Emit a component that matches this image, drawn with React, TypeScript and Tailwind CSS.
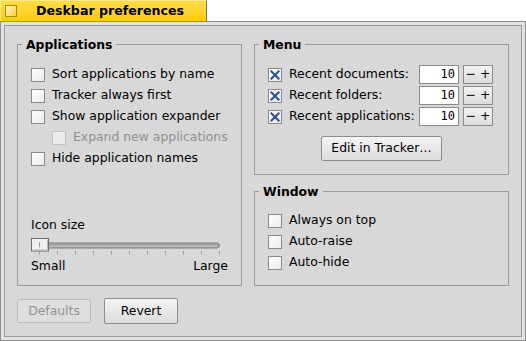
import React from "react";

function Box({ checked, disabled }: { checked?: boolean; disabled?: boolean }) {
  return (
    <span
      className={
        "w-[14px] h-[14px] shrink-0 border flex items-center justify-center " +
        (disabled
          ? "border-[#c2c2c2] bg-[#ebebeb]"
          : "border-[#8a8a8a] bg-gradient-to-br from-white to-[#ebebeb]")
      }
    >
      {checked && (
        <svg width="10" height="10" viewBox="0 0 10 10">
          <path d="M1.5 1.5L8.5 8.5M8.5 1.5L1.5 8.5" stroke="#2b5797" strokeWidth="2.2" strokeLinecap="square" />
        </svg>
      )}
    </span>
  );
}

function CheckRow({ label, checked, disabled, indent }: { label: string; checked?: boolean; disabled?: boolean; indent?: boolean }) {
  return (
    <div className={"h-[21px] flex items-center gap-[7px] " + (indent ? "pl-[21px]" : "")}>
      <Box checked={checked} disabled={disabled} />
      <span className={disabled ? "text-[#8f8f8f]" : "text-black"}>{label}</span>
    </div>
  );
}

function MenuRow({ label }: { label: string }) {
  return (
    <div className="h-[21px] flex items-center">
      <Box checked />
      <span className="ml-[7px] w-[130px] whitespace-nowrap">{label}</span>
      <div className="w-[40px] h-[19px] -mt-[1px] border border-[#8c8c8c] bg-white flex items-center justify-end pr-[3px] font-['DejaVu_Sans_Mono',monospace] text-[12px]">
        10
      </div>
      <div className="ml-[4px] -mt-[1px] w-[30px] h-[19px] border border-[#8c8c8c] bg-gradient-to-b from-[#f2f2f2] to-[#dcdcdc] flex items-center justify-center gap-[4px] leading-none">
        <span>−</span>
        <span>+</span>
      </div>
    </div>
  );
}

function Slider() {
  const ticks = Array.from({ length: 11 }, (_, i) => 8.5 + i * 18);
  return (
    <svg width="196" height="17" viewBox="0 0 196 17" className="block">
      <rect x="0.5" y="5" width="188" height="5" rx="2.5" fill="#a9a9a9" stroke="#7c7c7c" />
      <line x1="3" y1="8.5" x2="186" y2="8.5" stroke="#c4c4c4" />
      {ticks.map((x) => (
        <line key={x} x1={x} y1="13" x2={x} y2="16.5" stroke="#a0a0a0" />
      ))}
      <rect x="0.5" y="0.5" width="17" height="12.5" fill="#f0f0f0" stroke="#6e6e6e" />
      <line x1="1.5" y1="12" x2="17" y2="12" stroke="#b8b8b8" />
      <line x1="16.5" y1="1.5" x2="16.5" y2="12" stroke="#b8b8b8" />
      <line x1="8.5" y1="4" x2="8.5" y2="9.5" stroke="#a0a0a0" />
    </svg>
  );
}

export default function App() {
  return (
    <div className="w-[526px] h-[341px] bg-white flex flex-col font-['DejaVu_Sans','Liberation_Sans',sans-serif] text-[12.4px] text-black overflow-hidden">
      <div className="flex h-[21px] shrink-0">
        <div className="w-[207px] h-full border-r border-[#6f6f6f] border-t border-t-[#ffe98a] border-l border-l-[#ffe98a] bg-gradient-to-b from-[#ffdd45] to-[#ffcb00] flex items-center pl-[4px]">
          <span className="w-[12px] h-[12px] border border-[#a88a00] bg-gradient-to-br from-[#fff8d0] to-[#ffcc00]" />
          <span className="ml-[19px] font-bold text-[12.6px]">Deskbar preferences</span>
        </div>
        <div className="flex-1 bg-white" />
      </div>
      <div className="h-[320px] border border-[#8e8e8e] bg-[#e2e2e2] p-[3px] flex">
        <div className="flex-1 border border-[#9a9a9a] bg-[#d8d8d8] flex flex-col pt-[11px] pl-[12px] pr-[11px]">
          <div className="flex gap-[12px]">
            <fieldset className="w-[225px] border border-[#9c9c9c]">
              <legend className="ml-[4px] px-[4px] font-bold leading-[15px]">Applications</legend>
              <div className="h-[233px] flex flex-col pt-[12px] pl-[13px] pr-[13px]">
                <CheckRow label="Sort applications by name" />
                <CheckRow label="Tracker always first" />
                <CheckRow label="Show application expander" />
                <CheckRow label="Expand new applications" disabled indent />
                <CheckRow label="Hide application names" />
                <div className="mt-auto flex flex-col pb-[12px]">
                  <div className="h-[15px] leading-[15px]">Icon size</div>
                  <div className="mt-[6px]">
                    <Slider />
                  </div>
                  <div className="mt-[3px] h-[15px] leading-[15px] flex justify-between">
                    <span>Small</span>
                    <span>Large</span>
                  </div>
                </div>
              </div>
            </fieldset>
            <div className="w-[255px] flex flex-col">
              <fieldset className="border border-[#9c9c9c]">
                <legend className="ml-[4px] px-[4px] font-bold leading-[15px]">Menu</legend>
                <div className="flex flex-col pt-[12px] pl-[13px] pb-[13px]">
                  <MenuRow label="Recent documents:" />
                  <MenuRow label="Recent folders:" />
                  <MenuRow label="Recent applications:" />
                  <div className="mt-[9px] flex justify-center pr-[13px]">
                    <button className="h-[25px] w-[121px] border border-[#8c8c8c] rounded-[2px] bg-gradient-to-b from-[#f4f4f4] to-[#dcdcdc] text-black">
                      Edit in Tracker…
                    </button>
                  </div>
                </div>
              </fieldset>
              <fieldset className="mt-[9px] border border-[#9c9c9c]">
                <legend className="ml-[4px] px-[4px] font-bold leading-[15px]">Window</legend>
                <div className="h-[86px] flex flex-col pt-[11px] pl-[13px]">
                  <CheckRow label="Always on top" />
                  <CheckRow label="Auto-raise" />
                  <CheckRow label="Auto-hide" />
                </div>
              </fieldset>
            </div>
          </div>
          <div className="mt-[12px] h-[26px] flex items-center gap-[13px]">
            <button className="h-[24px] w-[74px] border border-[#bcbcbc] rounded-[2px] bg-[#dedede] text-[#939393]">
              Defaults
            </button>
            <button className="h-[26px] w-[74px] border border-[#8c8c8c] rounded-[2px] bg-gradient-to-b from-[#f4f4f4] to-[#dcdcdc] text-black">
              Revert
            </button>
          </div>
        </div>
      </div>
    </div>
  );
}
